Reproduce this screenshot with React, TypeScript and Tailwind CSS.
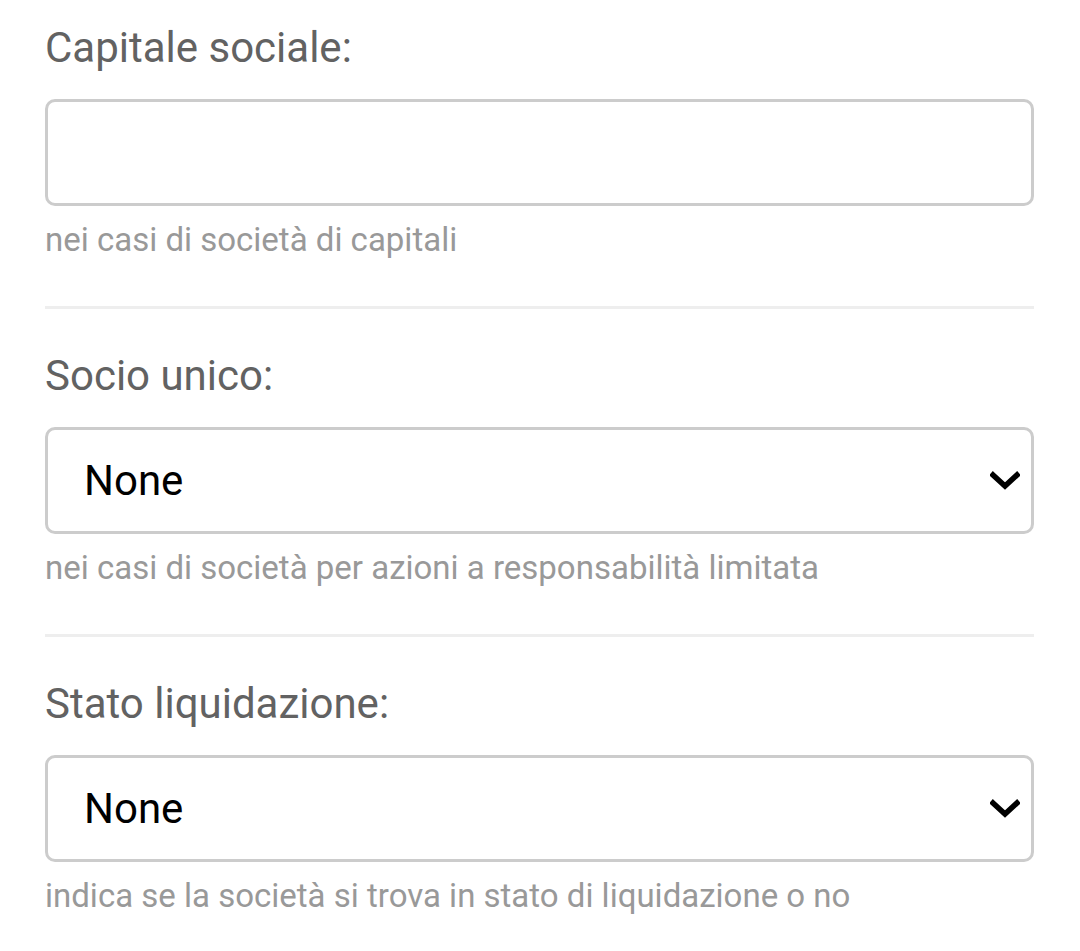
import React from "react";

const Chevron = () => (
  <svg
    className="pointer-events-none absolute right-[14px] top-1/2 -translate-y-1/2"
    width="30"
    height="20"
    viewBox="0 0 30 20"
    fill="none"
  >
    <path d="M3 4 L15 15 L27 4" stroke="#000" strokeWidth="5.5" strokeLinecap="square" />
  </svg>
);

type FieldProps = {
  label: string;
  help: string;
  select?: boolean;
  first?: boolean;
  last?: boolean;
};

const Field = ({ label, help, select, first, last }: FieldProps) => {
  return (
    <div className={first ? "" : "mt-[42px]"}>
      <label className="block text-[42px] leading-[49px] text-[#626262]">{label}</label>
      {select ? (
        <div className="relative mt-[27px]">
          <select
            defaultValue="None"
            className="h-[107px] w-full appearance-none rounded-[10px] border-[3px] border-[#ccc] bg-white pl-[36px] text-[42px] text-black outline-none"
          >
            <option>None</option>
          </select>
          <Chevron />
        </div>
      ) : (
        <input
          type="text"
          className="mt-[27px] block h-[107px] w-full rounded-[10px] border-[3px] border-[#ccc] bg-white px-[36px] text-[42px] outline-none"
        />
      )}
      <p className="mt-[15px] text-[33px] leading-[38px] text-[#999]">{help}</p>
      {!last && <hr className="mt-[47px] h-[3px] border-0 bg-[#eee]" />}
    </div>
  );
};

export default function App() {
  return (
    <div className="min-h-screen bg-white pl-[45px] pr-[46px] pt-[23px] font-['Roboto',sans-serif]">
      <Field first label="Capitale sociale:" help="nei casi di società di capitali" />
      <Field select label="Socio unico:" help="nei casi di società per azioni a responsabilità limitata" />
      <Field select last label="Stato liquidazione:" help="indica se la società si trova in stato di liquidazione o no" />
    </div>
  );
}
